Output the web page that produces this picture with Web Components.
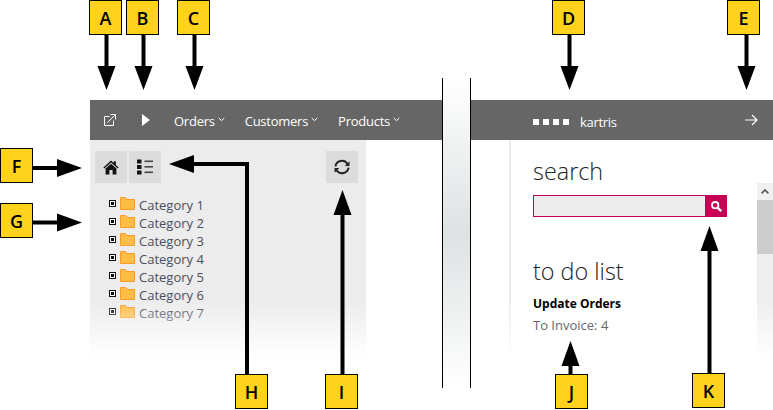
<!DOCTYPE html>
<html>
<head>
<meta charset="utf-8">
<title>kartris</title>
<style>
html,body{margin:0;padding:0;background:#fff;overflow:hidden;}
body{font-family:"Open Sans","Liberation Sans",sans-serif;}
</style>
</head>
<body>
<admin-shell>
    <top-bar slot="left">
        <icon-btn slot="start" kind="popout"></icon-btn>
        <icon-btn slot="start" kind="play"></icon-btn>
        <menu-item slot="start">Orders</menu-item>
        <menu-item slot="start">Customers</menu-item>
        <menu-item slot="start">Products</menu-item>
    </top-bar>
    <side-panel slot="left">
        <tree-item>Category 1</tree-item>
        <tree-item>Category 2</tree-item>
        <tree-item>Category 3</tree-item>
        <tree-item>Category 4</tree-item>
        <tree-item>Category 5</tree-item>
        <tree-item>Category 6</tree-item>
        <tree-item>Category 7</tree-item>
    </side-panel>
    <brand-bar slot="right"></brand-bar>
    <dash-panel slot="right"></dash-panel>
</admin-shell>

<call-out x="89" y="0" label="A" dir="down" len="90" cx="17.5"></call-out>
<call-out x="126" y="0" label="B" dir="down" len="90" cx="17.5"></call-out>
<call-out x="177" y="0" label="C" dir="down" len="90" cx="17.5"></call-out>
<call-out x="552" y="0" label="D" dir="down" len="90" cx="17.5"></call-out>
<call-out x="727" y="0" label="E" dir="down" len="90" cx="19.5"></call-out>
<call-out x="0" y="148" label="F" dir="right" len="82" cy="20"></call-out>
<call-out x="0" y="203" label="G" dir="right" len="82" cy="19.5"></call-out>
<call-out x="235" y="374" label="H" dir="elbow"></call-out>
<call-out x="325" y="374" label="I" dir="up" len="184" cx="17.5"></call-out>
<call-out x="555" y="374" label="J" dir="up" len="33" cx="15.5"></call-out>
<call-out x="692" y="373" label="K" dir="up" len="147" cx="17.5"></call-out>

<script>
const ICONS = {
    popout:`<svg width="12" height="12" viewBox="0 0 12 12" fill="none" stroke="#fff"><path d="M5.5 2.5H.5V11.5H9.5V6.5"/><path d="M3.5 8.5L10.8 1.2M6.5 .5H11.5V5.5"/></svg>`,
    play:`<svg width="8" height="12" viewBox="0 0 8 12" fill="#fff"><path d="M0 0L8 6L0 12Z"/></svg>`
};

class IconBtn extends HTMLElement{
    constructor(){
        super();
        this.attachShadow({mode:'open'});
    }
    connectedCallback(){
        this.shadowRoot.innerHTML = `
            <style>
                :host{display:flex;align-items:center;justify-content:center;width:36px;height:40px;}
            </style>
            ${ICONS[this.getAttribute('kind')]}
        `;
    }
}

class MenuItem extends HTMLElement{
    constructor(){
        super();
        this.attachShadow({mode:'open'});
        this.shadowRoot.innerHTML = `
            <style>
                :host{display:flex;align-items:center;gap:3px;padding:2px 10px 0;height:38px;color:#fff;font-size:13px;letter-spacing:-.25px;}
                svg{margin-top:-4px;}
            </style>
            <slot></slot>
            <svg width="7" height="5" viewBox="0 0 7 5" fill="none" stroke="#fff"><path d="M.7 1L3.5 3.6L6.3 1"/></svg>
        `;
    }
}

class TopBar extends HTMLElement{
    constructor(){
        super();
        this.attachShadow({mode:'open'});
        this.shadowRoot.innerHTML = `
            <style>
                :host{display:flex;align-items:center;height:40px;background:#666;padding-left:2px;}
            </style>
            <slot name="start"></slot>
        `;
    }
}

class BrandBar extends HTMLElement{
    constructor(){
        super();
        this.attachShadow({mode:'open'});
        this.shadowRoot.innerHTML = `
            <style>
                :host{display:flex;align-items:center;height:40px;background:#666;color:#fff;font-size:13px;padding:0 15px 0 62px;}
                .dots{display:flex;gap:4px;margin:4px 11px 0 0;}
                .dots i{width:6px;height:6px;background:#fff;display:block;}
                .name{flex:1;letter-spacing:-.3px;margin-top:3px;}
            </style>
            <div class="dots"><i></i><i></i><i></i><i></i></div>
            <div class="name">kartris</div>
            <svg width="13" height="12" viewBox="0 0 13 12" fill="none" stroke="#fff" stroke-width="1.2"><path d="M0 6H12M7 1L12 6L7 11"/></svg>
        `;
    }
}

class SquareBtn extends HTMLElement{
    constructor(){
        super();
        this.attachShadow({mode:'open'});
        this.shadowRoot.innerHTML = `
            <style>
                :host{display:flex;align-items:center;justify-content:center;width:32px;height:32px;background:#dcdcdc;}
            </style>
            <slot></slot>
        `;
    }
}

class TreeItem extends HTMLElement{
    constructor(){
        super();
        this.attachShadow({mode:'open'});
        this.shadowRoot.innerHTML = `
            <style>
                :host{display:flex;align-items:center;height:18px;color:#4a4f5e;font-size:13px;}
                .plus{width:7px;height:7px;border:1px solid #111;box-sizing:border-box;margin-right:4px;margin-top:-4px;position:relative;background:#fff;}
                .plus::after{content:"";position:absolute;left:1px;top:1px;width:3px;height:3px;background:#111;}
                svg{margin-right:4px;margin-top:-3px;}
            </style>
            <span class="plus"></span>
            <svg width="15" height="13" viewBox="0 0 15 13"><path d="M.5 12.5V.5H5.5L7 2.5H14.5V12.5Z" fill="#ffbd45" stroke="#fb9c2a"/></svg>
            <slot></slot>
        `;
    }
}

class SidePanel extends HTMLElement{
    constructor(){
        super();
        this.attachShadow({mode:'open'});
        this.shadowRoot.innerHTML = `
            <style>
                :host{display:block;position:relative;width:276px;height:217px;background:#ececec;box-sizing:border-box;padding:11px 8px 0 5px;}
                :host::after{content:"";position:absolute;left:0;right:0;bottom:0;height:57px;background:linear-gradient(rgba(255,255,255,0),#fff);}
                .tools{display:flex;gap:2px;margin-bottom:13px;}
                .spring{flex:1;}
                .tree{padding-left:14px;}
            </style>
            <div class="tools">
                <square-btn><svg width="16" height="15" viewBox="0 0 16 15" fill="#111"><path d="M8 0.6L0.4 7.4L1.3 8.4L8 2.5L14.7 8.4L15.6 7.4L12.8 4.9V1.2H10.8V3.1Z"/><path d="M8 3.8L2.6 8.5V14.6H6.4V10H9.6V14.6H13.4V8.5Z"/></svg></square-btn>
                <square-btn><svg width="16" height="16" viewBox="0 0 16 16" fill="#111"><rect x="0" y="0.5" width="4.5" height="4"/><rect x="0" y="6" width="4.5" height="4"/><rect x="0" y="11.5" width="4.5" height="4"/><rect x="7.5" y="1.5" width="8.5" height="1.6" fill="#444"/><rect x="7.5" y="7" width="8.5" height="1.6" fill="#444"/><rect x="7.5" y="12.5" width="8.5" height="1.6" fill="#444"/></svg></square-btn>
                <div class="spring"></div>
                <square-btn><svg width="16" height="16" viewBox="0 0 16 16" fill="none" stroke="#222" stroke-width="2"><path d="M1.4 7.4A6.6 6.6 0 0 1 13.4 4.8"/><path d="M14.6 8.6A6.6 6.6 0 0 1 2.6 11.2"/><path d="M15.5 2.2V7H10.7Z" fill="#222" stroke="none"/><path d="M.5 13.8V9H5.3Z" fill="#222" stroke="none"/></svg></square-btn>
            </div>
            <div class="tree"><slot></slot></div>
        `;
    }
}

class DashPanel extends HTMLElement{
    constructor(){
        super();
        this.attachShadow({mode:'open'});
        this.shadowRoot.innerHTML = `
            <style>
                :host{display:flex;height:217px;background:#fff;}
                .gutter{width:40px;flex:none;height:217px;display:flex;justify-content:flex-end;}
                .gutter i{display:block;width:2px;background:linear-gradient(#ececec 0,#ececec 74%,#fff 100%);}
                .main{width:246px;flex:none;padding-left:22px;box-sizing:border-box;}
                h2{font-weight:300;font-size:23.4px;line-height:32px;margin:15px 0 8px;color:#222;}
                h2.todo{margin:38px 0 0;}
                .box{display:flex;width:194px;height:22px;border:1px solid #c70055;box-sizing:border-box;background:#ececec;}
                .box input{flex:1;min-width:0;border:0;background:transparent;padding:0;outline:0;}
                .go{width:22px;margin:-1px -1px -1px 0;background:#c70055;display:flex;align-items:center;justify-content:center;}
                .title{font-size:12px;font-weight:700;color:#000;margin-top:8px;line-height:18px;}
                .note{font-size:13px;color:#666;margin-top:3px;line-height:18px;}
                .bar{width:16px;flex:none;margin-top:43px;background:linear-gradient(#eee 0,#eee 67%,#fff 100%);height:174px;}
                .up{height:17px;background:#f0f0f0;display:flex;align-items:center;justify-content:center;}
                .thumb{height:54px;background:#cdcdcd;}
            </style>
            <div class="gutter"><i></i></div>
            <div class="main">
                <h2>search</h2>
                <div class="box">
                    <input type="text">
                    <div class="go"><svg width="11" height="11" viewBox="0 0 11 11" fill="none" stroke="#fff"><circle cx="4.2" cy="4.2" r="3.2" stroke-width="1.8"/><path d="M6.8 6.8L10.2 10.2" stroke-width="2.4"/></svg></div>
                </div>
                <h2 class="todo">to do list</h2>
                <div class="title">Update Orders</div>
                <div class="note">To Invoice: 4</div>
            </div>
            <div class="bar">
                <div class="up"><svg width="8" height="5" viewBox="0 0 8 5" fill="none" stroke="#555" stroke-width="1.6"><path d="M.6 4.4L4 1L7.4 4.4"/></svg></div>
                <div class="thumb"></div>
            </div>
        `;
    }
}

class AdminShell extends HTMLElement{
    constructor(){
        super();
        this.attachShadow({mode:'open'});
        this.shadowRoot.innerHTML = `
            <style>
                :host{display:flex;height:410px;padding-left:90px;box-sizing:border-box;overflow:hidden;}
                .left{width:352px;padding-top:100px;flex:none;}
                .split{width:29px;flex:none;height:310px;margin-top:78px;box-sizing:border-box;border-left:1px solid #000;border-right:1px solid #000;background:linear-gradient(#fff 0,#dde2e2 50%,#fff 100%);}
                .right{flex:none;width:302px;padding-top:100px;}
            </style>
            <div class="left"><slot name="left"></slot></div>
            <div class="split"></div>
            <div class="right"><slot name="right"></slot></div>
        `;
    }
}

// annotation label plus its arrow, laid over the screenshot
class CallOut extends HTMLElement{
    constructor(){
        super();
        this.attachShadow({mode:'open'});
    }
    connectedCallback(){
        const x = +this.getAttribute('x'), y = +this.getAttribute('y');
        const dir = this.getAttribute('dir');
        const len = +this.getAttribute('len');
        const cx = +this.getAttribute('cx'), cy = +this.getAttribute('cy');
        let arrow = '', w = 33, h = 35, left = 0, top = 0;
        if(dir === 'down'){
            arrow = `<path d="M${cx} 34V67" stroke="#000" stroke-width="4" fill="none"/><path d="M${cx-9} 66H${cx+9}L${cx} ${len}Z"/>`;
            h = len + 1;
        }else if(dir === 'right'){
            arrow = `<path d="M32 ${cy}H58" stroke="#000" stroke-width="4" fill="none"/><path d="M57 ${cy-9}V${cy+9}L${len} ${cy}Z"/>`;
            w = len + 1;
        }else if(dir === 'up'){
            top = -len;
            h = len + 35;
            arrow = `<path d="M${cx} ${len+1}V24" stroke="#000" stroke-width="4" fill="none"/><path d="M${cx-9} 25H${cx+9}L${cx} 0Z"/>`;
        }else{
            left = -66; top = -219; w = 99; h = 254;
            arrow = `<path d="M78 220V9H25" stroke="#000" stroke-width="4" fill="none"/><path d="M25 0V18L0 9Z"/>`;
        }
        const boxTop = dir === 'up' || dir === 'elbow' ? -top : 0;
        const boxLeft = dir === 'elbow' ? -left : 0;
        this.shadowRoot.innerHTML = `
            <style>
                :host{position:absolute;display:block;left:${x+left}px;top:${y+top}px;width:${w}px;height:${h}px;}
                svg{position:absolute;left:0;top:0;overflow:visible;}
                .tag{position:absolute;left:${boxLeft}px;top:${boxTop}px;width:33px;height:35px;box-sizing:border-box;border:1px solid #000;background:#ffd21e;
                     display:flex;align-items:center;justify-content:center;font:600 18px "Open Sans","Liberation Sans",sans-serif;color:#000;}
            </style>
            <svg width="${w}" height="${h}">${arrow}</svg>
            <div class="tag">${this.getAttribute('label')}</div>
        `;
    }
}

customElements.define('icon-btn',IconBtn);
customElements.define('menu-item',MenuItem);
customElements.define('top-bar',TopBar);
customElements.define('brand-bar',BrandBar);
customElements.define('square-btn',SquareBtn);
customElements.define('tree-item',TreeItem);
customElements.define('side-panel',SidePanel);
customElements.define('dash-panel',DashPanel);
customElements.define('admin-shell',AdminShell);
customElements.define('call-out',CallOut);
</script>
</body>
</html>
